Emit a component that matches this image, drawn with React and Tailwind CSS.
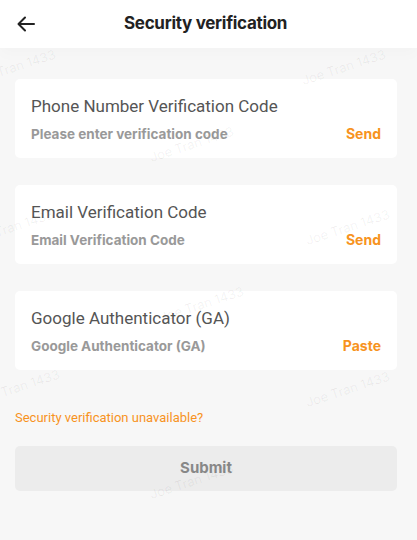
import React from 'react'

const marks = [
  { left: -30, top: 58 },
  { left: 300, top: 58 },
  { left: 148, top: 135 },
  { left: -32, top: 218 },
  { left: 304, top: 218 },
  { left: 158, top: 295 },
  { left: -26, top: 378 },
  { left: 304, top: 380 },
  { left: 148, top: 472 },
]

const Field = ({ title, hint, action }) => {
  return (
    <div className='bg-white rounded-[5px] h-[79px] px-4 pt-[16px] flex flex-col'>
      <span className='text-[17px] leading-[22px] text-[#555] font-["Roboto",sans-serif]'>{title}</span>
      <div className='flex justify-between items-center mt-[8px]'>
        <span className='text-[13.5px] leading-[18px] font-bold text-[#999]'>{hint}</span>
        <span className='text-[14px] leading-[18px] font-bold text-[#f7931e]'>{action}</span>
      </div>
    </div>
  )
}

const App = () => {
  return (
    <div className='relative min-h-[540px] w-[417px] overflow-hidden bg-[#f7f7f7] font-["Inter",sans-serif]'>

      <div className='h-[48px] bg-white flex items-center relative shadow-[0_6px_14px_rgba(0,0,0,0.02)]'>
        <svg className='absolute left-[17px] top-[16px]' width='18' height='16' viewBox='0 0 18 16' fill='none' stroke='#222' strokeWidth='2' strokeLinecap='round' strokeLinejoin='round'>
          <path d='M17 8H2' />
          <path d='M8 1.5L1.5 8L8 14.5' />
        </svg>
        <span className='ml-[124px] text-[17px] font-bold text-[#222] tracking-[-0.3px]'>Security verification</span>
      </div>

      <div className='flex flex-col pl-[15px] pr-[20px] pt-[31px] gap-[27px]'>
        <Field title='Phone Number Verification Code' hint='Please enter verification code' action='Send' />
        <Field title='Email Verification Code' hint='Email Verification Code' action='Send' />
        <Field title='Google Authenticator (GA)' hint='Google Authenticator (GA)' action='Paste' />
      </div>

      <div className='px-[15px] mt-[34px]'>
        <span className='text-[13px] text-[#f7931e] font-["Roboto",sans-serif]'>Security verification unavailable?</span>
      </div>

      <div className='pl-[15px] pr-[20px] mt-[18px]'>
        <button className='w-full h-[45px] rounded-[5px] bg-[#ececec] text-[15px] font-bold text-[#888]'>Submit</button>
      </div>

      <div className='absolute inset-0 pointer-events-none'>
        {marks.map((m, i) => (
          <span
            key={i}
            className='absolute text-[13px] text-black/[0.06] whitespace-nowrap -rotate-[18deg]'
            style={{ left: m.left, top: m.top }}
          >
            Joe Tran 1433
          </span>
        ))}
      </div>
    </div>
  )
}

export default App
